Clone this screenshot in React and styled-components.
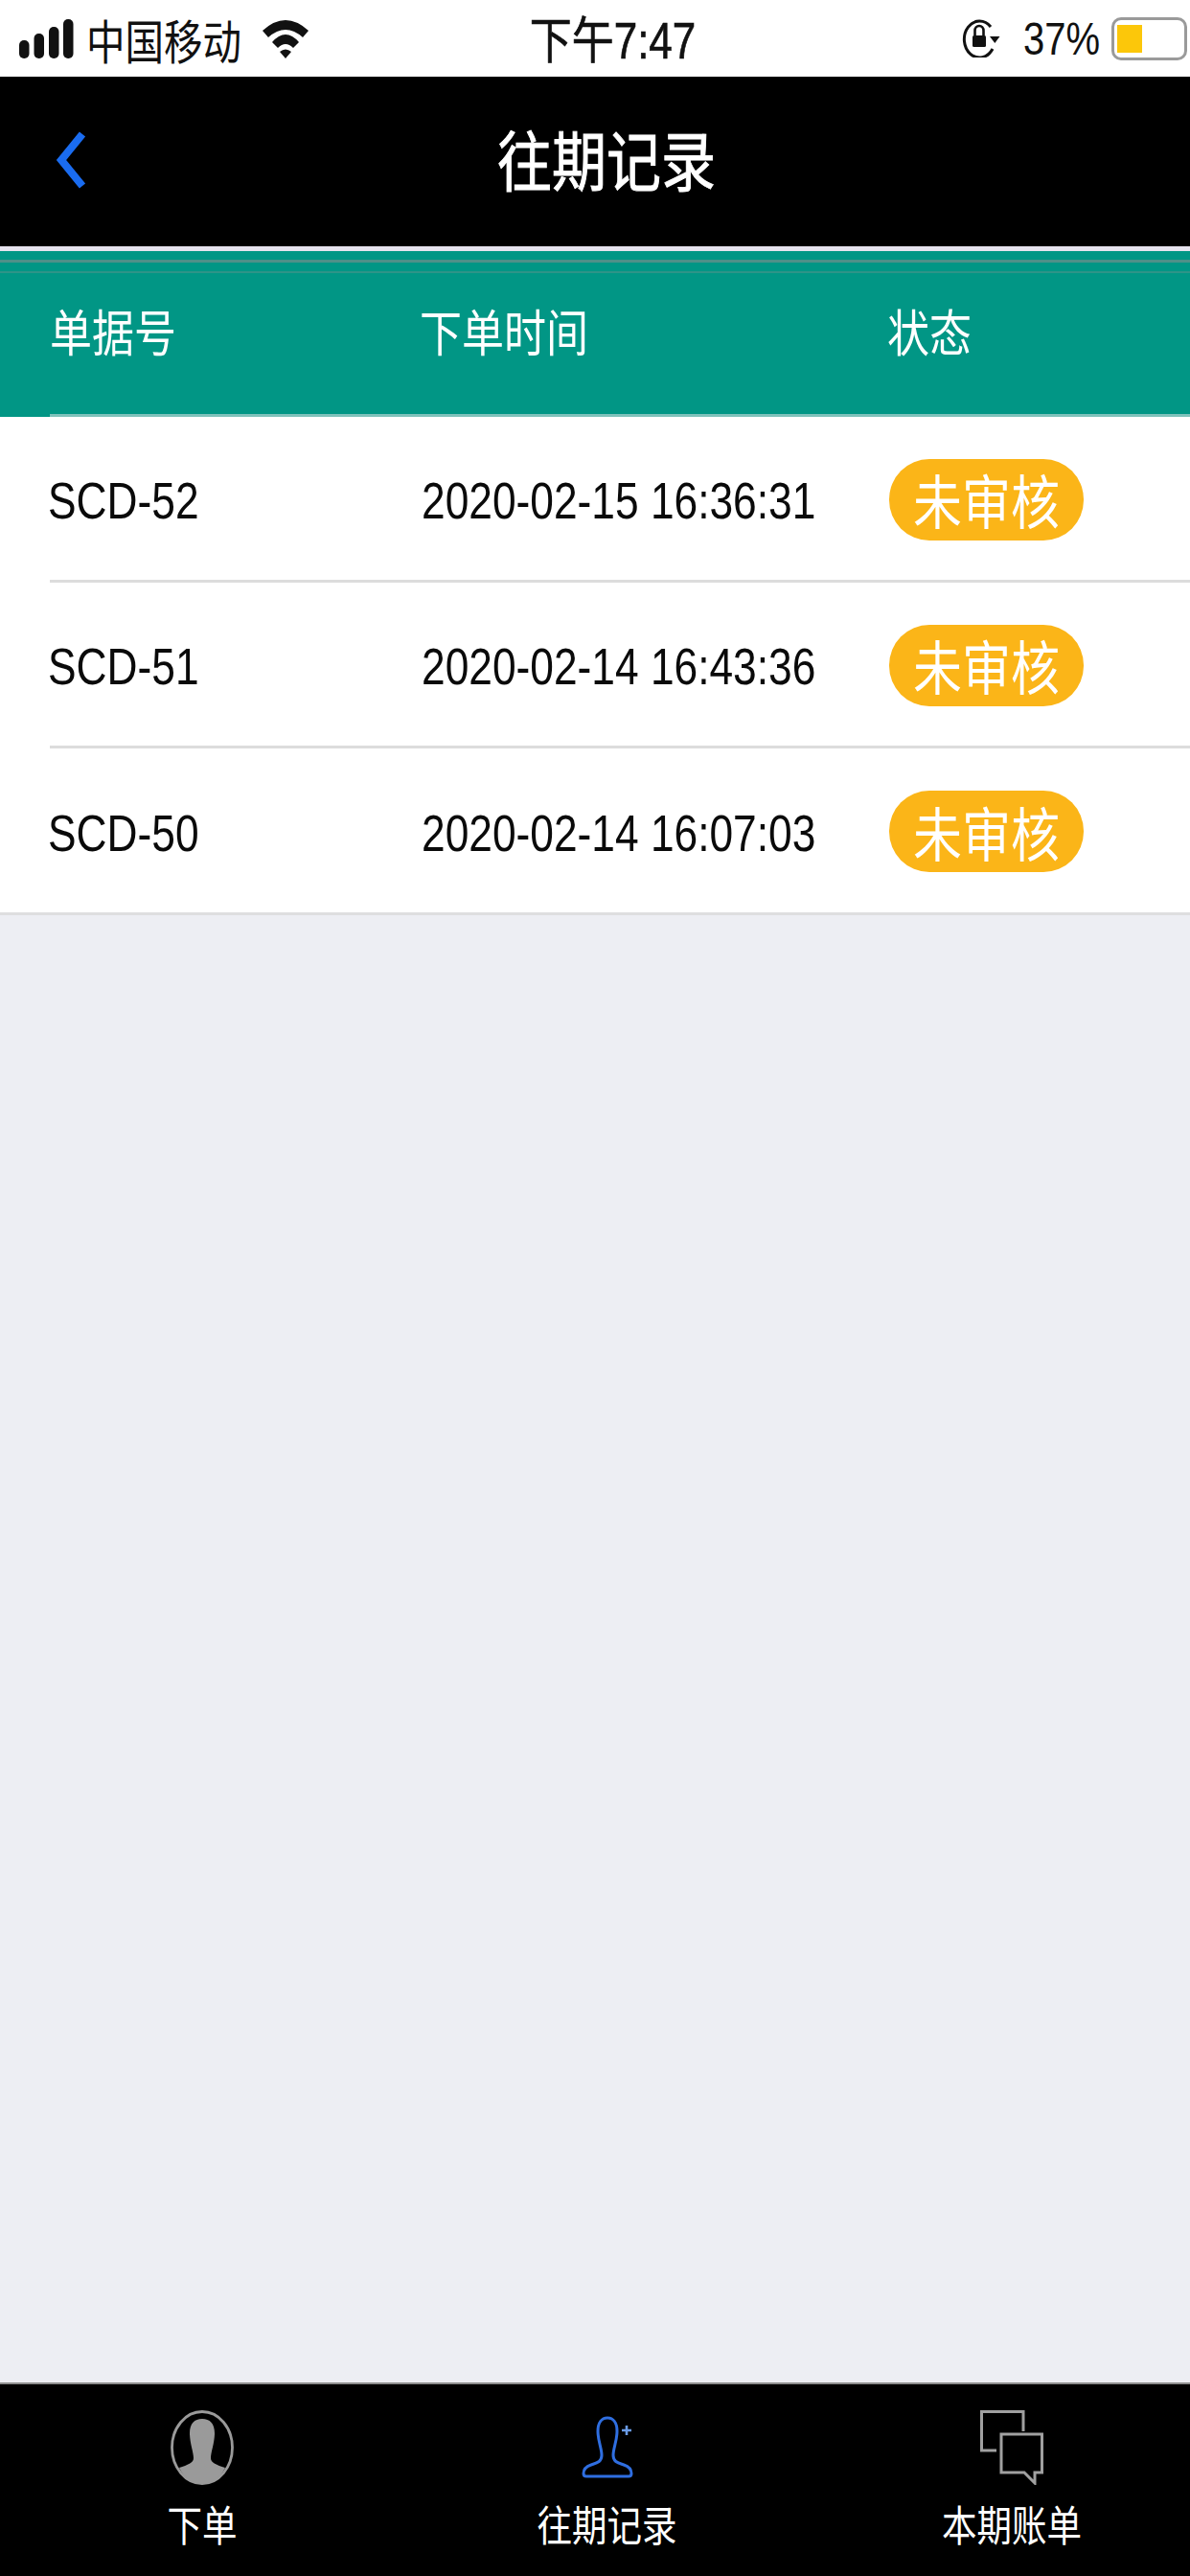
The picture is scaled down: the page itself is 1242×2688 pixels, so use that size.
import React from 'react'
import styled, { createGlobalStyle } from 'styled-components'

const FONT = '"Liberation Sans", "Noto Sans CJK SC", sans-serif'

const GlobalStyle = createGlobalStyle`
html, body {
  margin: 0;
  padding: 0;
  background: #edeef3;
}
body {
  font-family: ${FONT};
}
`

const Page = styled.div`
width: 1242px;
height: 2688px;
display: flex;
flex-direction: column;
overflow: hidden;
background: #edeef3;
`

// the screenshot is a 750x1334 capture stretched to fit, so text runs tall
const Tall = styled.span`
display: inline-block;
transform: scaleY(1.2);
white-space: nowrap;
`

const StatusBar = styled.div`
height: 80px;
flex: none;
box-sizing: border-box;
padding: 0 3px 0 20px;
background: #fff;
color: #111;
display: grid;
grid-template-columns: 1fr auto 1fr;
align-items: center;
`

const StatusLeft = styled.div`
display: flex;
align-items: center;
font-size: 40.5px;
`

const Carrier = styled(Tall)`
margin-left: 13px;
margin-right: 22px;
`

const StatusTime = styled(Tall)`
font-size: 44px;
margin-left: 20px;
margin-top: -5px;
-webkit-text-stroke: 0.6px #111;
`

const StatusRight = styled.div`
display: flex;
align-items: center;
justify-content: flex-end;
font-size: 41px;
`

const Percent = styled(Tall)`
margin-left: 24px;
margin-right: 12px;
font-size: 40px;
`

const Battery = styled.div`
width: 79px;
height: 45px;
box-sizing: border-box;
border: 3px solid #9a9a9a;
border-radius: 10px;
padding: 5px 3px;
`

const BatteryFill = styled.div`
width: 26px;
height: 100%;
background: #fcc70a;
`

const NavBar = styled.div`
height: 177px;
flex: none;
background: #000;
color: #fff;
display: flex;
align-items: center;
justify-content: center;
position: relative;
`

const BackButton = styled.svg`
position: absolute;
left: 58px;
top: 57px;
`

const NavTitle = styled(Tall)`
font-size: 57px;
-webkit-text-stroke: 0.8px #fff;
margin-left: 24px;
margin-top: -10px;
`

const Rule = styled.div`
height: 5px;
flex: none;
background: #e6e3ee;
`

const TableHead = styled.div`
height: 173px;
flex: none;
background:
  linear-gradient(#4f9089, #4f9089) 0 9px / 100% 3px no-repeat,
  linear-gradient(#2d9488, #2d9488) 0 21px / 100% 2px no-repeat,
  linear-gradient(#7fc2bb, #7fc2bb) 52px 100% / 100% 3px no-repeat,
  #019685;
color: #fff;
font-size: 44px;
`

const Columns = styled.div`
height: 100%;
display: grid;
grid-template-columns: 386px 488px 1fr;
align-items: center;
padding-left: 52px;
box-sizing: border-box;
`

const HeadCell = styled(Tall)`
position: relative;
top: -5px;
`

const List = styled.div`
flex: none;
background: #fff;
`

const Row = styled.div`
height: 173px;
margin-left: 52px;
padding-top: 2px;
box-sizing: border-box;
border-bottom: 3px solid #dcdcdc;
&:last-child {
  height: 171px;
  border-bottom: 0;
}
`

const RowInner = styled(Columns)`
grid-template-columns: 390px 488px 1fr;
padding-left: 0;
margin-left: -2px;
font-size: 44.3px;
color: #0a0a0a;
`

const RowText = styled(Tall)`
position: relative;
top: 2px;
`

const Pill = styled.div`
width: 203px;
height: 85px;
border-radius: 42px;
background: #fbb518;
color: #fff;
font-size: 51px;
display: flex;
align-items: center;
justify-content: center;
`

const ListEnd = styled.div`
height: 3px;
flex: none;
background: #dededf;
`

const Spacer = styled.div`
flex: 1;
`

const TabBar = styled.div`
height: 202px;
flex: none;
box-sizing: border-box;
border-top: 2px solid #8d8d8d;
padding: 27px 113px 0 138px;
background: #000;
color: #fff;
display: flex;
justify-content: space-between;
`

const Tab = styled.div`
width: 146px;
display: flex;
flex-direction: column;
align-items: center;
font-size: 36.5px;
`

const TabIcon = styled.svg`
display: block;
height: 78px;
margin-bottom: 14px;
`

function SignalIcon() {
  return (
    <svg width="57" height="41" viewBox="0 0 57 41">
      <rect x="0" y="22" width="10.5" height="19" rx="5" fill="#111" />
      <rect x="15.5" y="15" width="10.5" height="26" rx="5" fill="#111" />
      <rect x="31" y="8" width="10.5" height="33" rx="5" fill="#111" />
      <rect x="46" y="0" width="10.5" height="41" rx="5" fill="#111" />
    </svg>
  )
}

function WifiIcon() {
  return (
    <svg width="48" height="41" viewBox="0 0 48 41">
      <path d="M0 12 Q24 -10 48 12 L42 19 Q24 3 6 19 Z" fill="#111" />
      <path d="M10 24 Q24 8 38 24 L32 30 Q24 22 16 30 Z" fill="#111" />
      <path d="M18 34 Q24 29 30 34 L24 41 Z" fill="#111" />
    </svg>
  )
}

function LockIcon() {
  return (
    <svg width="40" height="40" viewBox="0 0 40 40">
      <path d="M30 8 A16 19 0 1 0 32 31" fill="none" stroke="#111" strokeWidth="3" />
      <path d="M29 18 L39.5 18 L34.3 25 Z" fill="#111" />
      <rect x="11" y="17" width="14" height="12" rx="1.5" fill="#111" />
      <path d="M13.5 17 V12 A4.5 5 0 0 1 22.5 12 V17" fill="none" stroke="#111" strokeWidth="2.6" />
    </svg>
  )
}

function PersonIcon() {
  return (
    <TabIcon width="66" viewBox="0 0 66 78">
      <ellipse cx="33" cy="39" rx="31.5" ry="37.5" fill="none" stroke="#9a9a9a" strokeWidth="2.8" />
      <path
        d="M33 9 C25 9 20 14 20 24 C20 34 24 44 24 50 C24 55 18 57 9 60 C15 72 24 77 33 77 C42 77 51 72 57 60 C48 57 42 55 42 50 C42 44 46 34 46 24 C46 14 41 9 33 9 Z"
        fill="#9a9a9a"
      />
    </TabIcon>
  )
}

function RecordIcon() {
  return (
    <TabIcon width="66" viewBox="0 0 66 78">
      <path
        d="M33 8 C27 8 23 13 23 22 C23 32 27 40 27 47 C27 54 22 55 16 57 C10 59 8 62 8 66 C8 68 9 69 11 69 H55 C57 69 58 68 58 66 C58 62 56 59 50 57 C44 55 39 54 39 47 C39 40 43 32 43 22 C43 13 39 8 33 8 Z"
        fill="none"
        stroke="#2f6ee0"
        strokeWidth="3"
      />
      <path d="M53 16 V26 M48 21 H58" stroke="#6a9be6" strokeWidth="2.6" />
    </TabIcon>
  )
}

function BillIcon() {
  return (
    <TabIcon width="66" viewBox="0 0 66 78">
      <path d="M45 22 V1.5 H1.5 V42 H17" fill="none" stroke="#a0a0a0" strokeWidth="3" />
      <path d="M22 25 H64.5 V65 H57 V76 L46 65 H22 Z" fill="none" stroke="#a0a0a0" strokeWidth="3" />
    </TabIcon>
  )
}

const records = [
  { id: 'SCD-52', time: '2020-02-15 16:36:31' },
  { id: 'SCD-51', time: '2020-02-14 16:43:36' },
  { id: 'SCD-50', time: '2020-02-14 16:07:03' },
]

export default function App() {
  return (
    <Page>
      <GlobalStyle />
      <StatusBar>
        <StatusLeft>
          <SignalIcon />
          <Carrier>中国移动</Carrier>
          <WifiIcon />
        </StatusLeft>
        <StatusTime>下午7:47</StatusTime>
        <StatusRight>
          <LockIcon />
          <Percent>37%</Percent>
          <Battery>
            <BatteryFill />
          </Battery>
        </StatusRight>
      </StatusBar>
      <NavBar>
        <BackButton width="32" height="60" viewBox="0 0 32 60">
          <path d="M28 3 L6 30 L28 57" fill="none" stroke="#1a6cf0" strokeWidth="8" />
        </BackButton>
        <NavTitle>往期记录</NavTitle>
      </NavBar>
      <Rule />
      <TableHead>
        <Columns>
          <HeadCell>单据号</HeadCell>
          <HeadCell>下单时间</HeadCell>
          <HeadCell>状态</HeadCell>
        </Columns>
      </TableHead>
      <List>
        {records.map(r => (
          <Row key={r.id}>
            <RowInner>
              <RowText>{r.id}</RowText>
              <RowText>{r.time}</RowText>
              <Pill>
                <Tall>未审核</Tall>
              </Pill>
            </RowInner>
          </Row>
        ))}
      </List>
      <ListEnd />
      <Spacer />
      <TabBar>
        <Tab>
          <PersonIcon />
          <Tall>下单</Tall>
        </Tab>
        <Tab>
          <RecordIcon />
          <Tall>往期记录</Tall>
        </Tab>
        <Tab>
          <BillIcon />
          <Tall>本期账单</Tall>
        </Tab>
      </TabBar>
    </Page>
  )
}
